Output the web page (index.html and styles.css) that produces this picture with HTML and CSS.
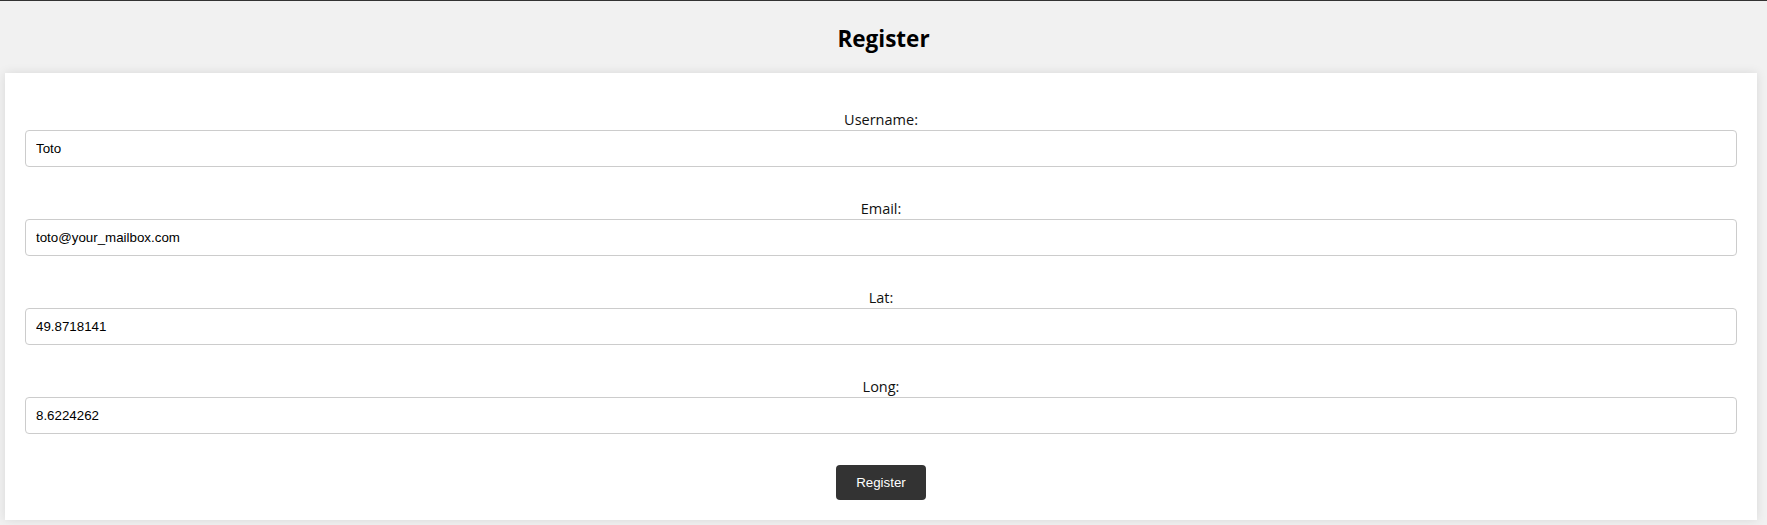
FILE: index.html
```html
<!DOCTYPE html>
<html lang="en">
<head>
<meta charset="utf-8">
<title>Register</title>
<link rel="stylesheet" href="styles.css">
</head>
<body>
<header class="top">
  <h1 class="title">Register</h1>
</header>
<main class="card">
  <form class="form">
    <div class="group">
      <label class="label" for="username">Username:</label>
      <input class="input" id="username" type="text" value="Toto">
    </div>
    <div class="group">
      <label class="label" for="email">Email:</label>
      <input class="input" id="email" type="text" value="toto@your_mailbox.com">
    </div>
    <div class="group">
      <label class="label" for="lat">Lat:</label>
      <input class="input" id="lat" type="text" value="49.8718141">
    </div>
    <div class="group">
      <label class="label" for="long">Long:</label>
      <input class="input" id="long" type="text" value="8.6224262">
    </div>
    <div class="actions">
      <button class="btn" type="button">Register</button>
    </div>
  </form>
</main>
</body>
</html>
```
FILE: styles.css
```css
html, body {
  margin: 0;
  padding: 0;
}
body {
  background: #f1f1f1;
  border-top: 1px solid #333;
  font-family: "Open Sans", "Noto Sans", sans-serif;
  color: #111;
  min-height: 524px;
}
.top {
  box-sizing: border-box;
  height: 72px;
  padding-top: 4px;
  display: flex;
  align-items: center;
  justify-content: center;
}
.title {
  margin: 0;
  font-size: 22.5px;
  font-weight: 700;
  color: #000;
  line-height: 1;
}
.card {
  margin: 0 10px 5px 5px;
  background: #fff;
  box-shadow: 0 0 10px rgba(0,0,0,0.1);
  padding: 36px 20px 20px;
}
.form {
  display: flex;
  flex-direction: column;
  gap: 31px;
}
.group {
  display: flex;
  flex-direction: column;
}
.label {
  text-align: center;
  font-size: 14.5px;
  line-height: 21px;
  color: #111;
}
.input {
  box-sizing: border-box;
  height: 37px;
  width: 100%;
  border: 1px solid #ccc;
  border-radius: 4px;
  padding: 0 10px;
  font-family: "Liberation Sans", Arial, sans-serif;
  font-size: 13.333px;
  color: #000;
  background: #fff;
}
.actions {
  display: flex;
  justify-content: center;
}
.btn {
  width: 90px;
  height: 35px;
  border: none;
  border-radius: 4px;
  background: #333;
  color: #fff;
  font-family: "Liberation Sans", Arial, sans-serif;
  font-size: 13.333px;
}
```
